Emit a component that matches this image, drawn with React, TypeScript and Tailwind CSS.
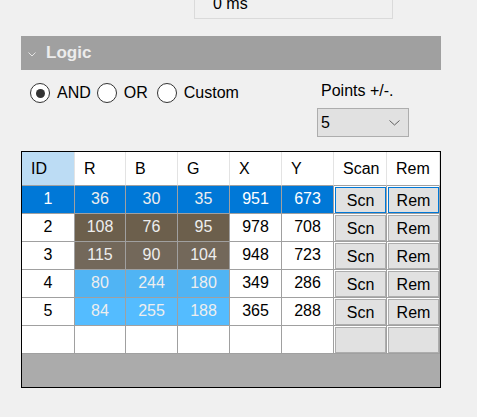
import React from "react";

type Row = {
  id: string;
  r: string;
  b: string;
  g: string;
  x: string;
  y: string;
  color: string;
  selected?: boolean;
  empty?: boolean;
};

const rows: Row[] = [
  { id: "1", r: "36", b: "30", g: "35", x: "951", y: "673", color: "#0078d7", selected: true },
  { id: "2", r: "108", b: "76", g: "95", x: "978", y: "708", color: "#6c5f4c" },
  { id: "3", r: "115", b: "90", g: "104", x: "948", y: "723", color: "#73685a" },
  { id: "4", r: "80", b: "244", g: "180", x: "349", y: "286", color: "#50b4f4" },
  { id: "5", r: "84", b: "255", g: "188", x: "365", y: "288", color: "#54bcff" },
  { id: "", r: "", b: "", g: "", x: "", y: "", color: "#ffffff", empty: true },
];

const gridCols = "grid grid-cols-[53px_51px_52px_52px_52px_52px_53px_53px]";

function Radio({ checked }: { checked?: boolean }) {
  return (
    <div className="w-[20px] h-[20px] rounded-full border-[1.5px] border-[#333333] bg-white flex items-center justify-center shrink-0">
      {checked ? <div className="w-[9px] h-[9px] rounded-full bg-[#333333]" /> : null}
    </div>
  );
}

function BtnCell({ label, selected }: { label: string; selected?: boolean }) {
  return (
    <div className="h-[28px] border-r border-b border-[#a0a0a0] bg-white pl-px pt-px">
      <div
        className={
          "h-full w-full border flex items-center justify-center bg-[#e1e1e1] text-black pt-[2px] " +
          (selected ? "border-[#0078d7]" : "border-[#adadad]")
        }
      >
        {label}
      </div>
    </div>
  );
}

function DataCell({ text, bg, fg }: { text: string; bg: string; fg: string }) {
  return (
    <div
      className="h-[28px] border-r border-b border-[#a0a0a0] flex items-center justify-center pb-[1px]"
      style={{ backgroundColor: bg, color: fg }}
    >
      {text}
    </div>
  );
}

export default function App() {
  return (
    <div className="w-[477px] h-[417px] overflow-hidden bg-[#f0f0f0] font-['Liberation_Sans',Arial,sans-serif] text-[16px] text-black">
      {/* top box */}
      <div className="ml-[194px] w-[199px] h-[19px] border border-t-0 border-[#dadada] overflow-hidden">
        <div className="pl-[18px] leading-[18px] -mt-[5px]">0 ms</div>
      </div>

      {/* Logic header */}
      <div className="mt-[17px] ml-[21px] w-[420px] h-[34px] bg-[#a0a0a0] flex items-center">
        <svg width="8" height="5" viewBox="0 0 8 5" className="ml-[7px] mt-[3px]">
          <polyline points="0.5,0.5 4,4 7.5,0.5" fill="none" stroke="#e4e4e4" strokeWidth="1" />
        </svg>
        <span className="ml-[10px] font-bold text-[17px] text-[#ececec]">Logic</span>
      </div>

      {/* options */}
      <div className="flex h-[81px]">
        <div className="w-[317px] pl-[30px] pt-[13px]">
          <div className="flex items-center h-[20px]">
            <Radio checked />
            <span className="ml-[7px]">AND</span>
            <div className="ml-[6px]">
              <Radio />
            </div>
            <span className="ml-[7px]">OR</span>
            <div className="ml-[9px]">
              <Radio />
            </div>
            <span className="ml-[7px]">Custom</span>
          </div>
        </div>
        <div className="flex flex-col pt-[12px]">
          <div className="ml-[4px] leading-[18px]">Points +/-.</div>
          <div className="mt-[8px] w-[92px] h-[29px] border border-[#adadad] bg-[#e1e1e1] flex items-center pl-[3px] pr-[8px]">
            <span>5</span>
            <svg width="11" height="6" viewBox="0 0 11 6" className="ml-auto">
              <polyline points="0.5,0.5 5.5,5 10.5,0.5" fill="none" stroke="#606060" strokeWidth="1" />
            </svg>
          </div>
        </div>
      </div>

      {/* table */}
      <div className="ml-[21px] w-[420px] border border-black bg-[#ababab]">
        <div className={gridCols}>
          {["ID", "R", "B", "G", "X", "Y", "Scan", "Rem"].map((h, i) => (
            <div
              key={h}
              className={
                "h-[34px] border-b border-b-[#a0a0a0] border-r border-r-[#e3e3e3] flex items-center pl-[9px] " +
                (i === 0 ? "bg-[#bcdcf4]" : "bg-white")
              }
            >
              {h}
            </div>
          ))}
        </div>
        {rows.map((row, idx) => {
          const sel = !!row.selected;
          const plainBg = sel ? "#0078d7" : "#ffffff";
          const plainFg = sel ? "#ffffff" : "#000000";
          const colorFg = row.empty ? "#000000" : "#eeeeee";
          return (
            <div key={idx} className={gridCols}>
              <DataCell text={row.id} bg={plainBg} fg={plainFg} />
              <DataCell text={row.r} bg={row.color} fg={colorFg} />
              <DataCell text={row.b} bg={row.color} fg={colorFg} />
              <DataCell text={row.g} bg={row.color} fg={colorFg} />
              <DataCell text={row.x} bg={plainBg} fg={plainFg} />
              <DataCell text={row.y} bg={plainBg} fg={plainFg} />
              <BtnCell label={row.empty ? "" : "Scn"} selected={sel} />
              <BtnCell label={row.empty ? "" : "Rem"} selected={sel} />
            </div>
          );
        })}
        <div className="h-[33px]" />
      </div>
    </div>
  );
}
